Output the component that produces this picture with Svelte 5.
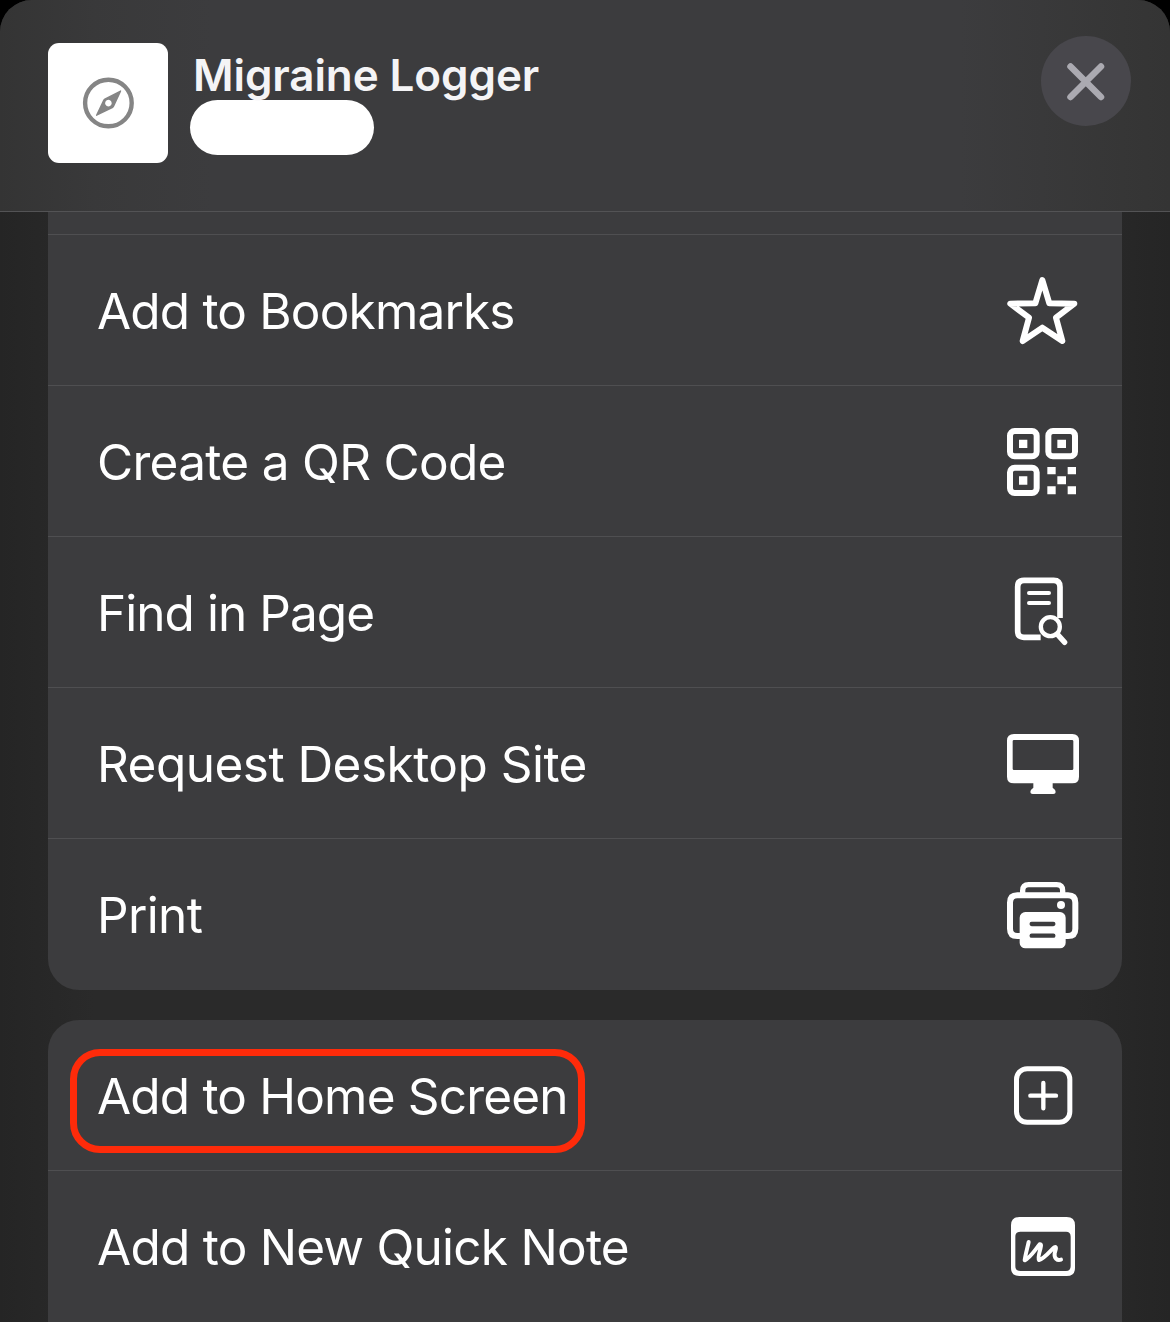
<script>
  const pageActions = [
    { label: 'Add to Bookmarks', icon: 'star', viewBox: '0 0 330 300', spacing: -0.82 },
    { label: 'Create a QR Code', icon: 'qr', viewBox: '0 3 330 300', spacing: -0.7 },
    { label: 'Find in Page', icon: 'find', viewBox: '0 6 330 300', spacing: -0.95 },
    { label: 'Request Desktop Site', icon: 'desktop', viewBox: '0 -21 330 300', spacing: -0.53 },
    { label: 'Print', icon: 'print', viewBox: '0 -18 330 300', spacing: -0.65 }
  ];
  const saveActions = [
    { label: 'Add to Home Screen', icon: 'plus', viewBox: '0 -15 330 300', highlighted: true, spacing: -0.82 },
    { label: 'Add to New Quick Note', icon: 'note', viewBox: '0 -12 330 300', spacing: -0.75 }
  ];
</script>

{#snippet row(action)}
  <div class="row">
    <span class="label" class:highlighted={action.highlighted} style:letter-spacing="{action.spacing}px">{action.label}</span>
    <svg class="icon" viewBox={action.viewBox} aria-hidden="true">
      {#if action.icon === 'star'}
        <path class="line" stroke-width="18" d="M157 60 L178 130 L253 131 L198 173 L217 243 L157 203 L98 243 L117 173 L61 131 L136 130 Z" />
      {:else if action.icon === 'qr'}
        <rect class="line" stroke-width="18" x="60" y="63" width="80" height="76" rx="14" />
        <rect class="line" stroke-width="18" x="175" y="63" width="80" height="76" rx="14" />
        <rect class="line" stroke-width="18" x="60" y="173" width="80" height="76" rx="14" />
        <path class="solid" d="M87 89h25v25H87zM202 89h26v25h-26zM87 199h25v25H87zM172 171h25v22h-25zM233 171h25v22h-25zM202 199h26v24h-26zM172 229h25v24h-25zM233 229h25v24h-25z" />
      {:else if action.icon === 'find'}
        <path class="line butt" stroke-width="17" d="M152 232H102Q83 232 83 213V81Q83 61 102 61H191Q210 61 210 81V174" />
        <path class="line" stroke-width="12" d="M117 99H177M117 129H177" />
        <circle class="line" stroke-width="13" cx="181" cy="200" r="28.5" />
        <path class="line" stroke-width="16" d="M203 224L224 247" />
      {:else if action.icon === 'desktop'}
        <path class="solid" fill-rule="evenodd" d="M72 42H247Q267 42 267 62V170Q267 190 247 190H188V203Q197 209 197 216Q197 222 190 222H128Q121 222 121 216Q121 209 130 203V190H72Q51 190 51 170V62Q51 42 72 42ZM72 60Q68 60 68 64V146Q68 150 72 150H246Q250 150 250 146V64Q250 60 246 60Z" />
      {:else if action.icon === 'print'}
        <path class="line butt" stroke-width="16" d="M98 74V62Q98 44 116 44H200Q218 44 218 62V74" />
        <path class="line butt" stroke-width="18" d="M92 198H82Q60 198 60 176V98Q60 76 82 76H234Q256 76 256 98V176Q256 198 234 198H224" />
        <rect class="solid" x="89" y="126" width="138" height="109" rx="17" />
        <circle class="solid" cx="213" cy="105" r="12" />
        <path class="cut" stroke-width="13" d="M125 162H190M125 197H190" />
      {:else if action.icon === 'plus'}
        <rect class="line" stroke-width="15" x="79.500" y="56" width="160" height="161" rx="32" />
        <path class="line" stroke-width="13" d="M160 99V175M121 137H198" />
      {:else}
        <path class="solid" fill-rule="evenodd" d="M88 51H230Q255 51 255 76V204Q255 228 230 228H88Q63 228 63 204V76Q63 51 88 51ZM91 95Q76 95 76 110V198Q76 213 91 213H228Q242 213 242 198V110Q242 95 228 95Z" />
        <path class="line" stroke-width="12" d="M116 126C112 145 106 164 104 181C120 174 134 151 149 133C155 132 153 139 151 147C147 161 144 177 147 180C164 176 179 154 193 142C202 138 196 151 194 160C192 174 201 183 213 179" />
      {/if}
    </svg>
  </div>
{/snippet}

<div class="screen">
  <div class="sheet">
    <header>
      <div class="thumb">
        <svg viewBox="0 0 52 52" aria-hidden="true">
          <circle cx="26.400" cy="26" r="23.300" fill="none" stroke="#858585" stroke-width="4.400" />
          <path fill="#858585" fill-rule="evenodd" d="M38.800 13.300Q39.600 13.500 39 14.700L32.400 29Q32 30 31 31L15.400 38.600Q13.600 39.400 14 38L21 23.200Q21.600 21.800 23 21.200ZM26.400 22.800a3.300 3.300 0 1 0 .01 0Z" />
        </svg>
      </div>
      <div class="heading">
        <h1>Migraine Logger</h1>
        <div class="pill"></div>
      </div>
      <button class="close" aria-label="Close">
        <svg viewBox="0 0 90 90" aria-hidden="true"><path d="M29.500 30.500L60 61M60 30.500L29.500 61" /></svg>
      </button>
    </header>
    <main>
      <section class="card upper">
        {#each pageActions as action}{@render row(action)}{/each}
      </section>
      <section class="card lower">
        {#each saveActions as action}{@render row(action)}{/each}
      </section>
    </main>
  </div>
</div>

<style>
  :global(body) { margin: 0; background: #000; overflow: hidden; }
  .screen { width: 1170px; height: 1322px; overflow: hidden; background: #000; font-family: Inter, 'Liberation Sans', sans-serif; }
  .sheet { height: 1322px; border-radius: 32px 32px 0 0; overflow: hidden; background: linear-gradient(90deg, #252525, #2a2a2a 8%, #2a2a2a 92%, #252525); }
  header { box-sizing: border-box; height: 212px; padding: 36px 39px 0 48px; display: flex; align-items: flex-start; border-bottom: 1px solid #535355; background: linear-gradient(90deg, #343434, #39393a 8%, #3c3c3e 18%, #3c3c3e 82%, #363636 96%, #343434); }
  .thumb { width: 120px; height: 120px; margin-top: 7px; border-radius: 11px; background: #fff; display: grid; place-items: center; }
  .thumb svg { width: 52px; height: 52px; }
  .heading { margin-left: 21.500px; flex: 1; }
  h1 { margin: 14px 0 0 3.500px; font-size: 44px; line-height: 50px; font-weight: 600; color: #f4f4f6; letter-spacing: -0.1px; white-space: nowrap; }
  .pill { width: 184.500px; height: 54.500px; border-radius: 28px; background: #fff; }
  .close { width: 90px; height: 90px; padding: 0; border: 0; border-radius: 50%; background: #48474c; }
  .close svg { display: block; width: 90px; height: 90px; }
  .close path { stroke: #abaab1; stroke-width: 6.500; stroke-linecap: round; }
  main { padding: 0 48px; }
  .card { background: #3c3c3e; }
  .upper { padding-top: 22px; height: 756px; border-radius: 0 0 31px 31px; }
  .lower { margin-top: 30px; height: 302px; border-radius: 31px 31px 0 0; }
  .row { box-sizing: border-box; height: 151px; padding: 0 22px 0 49px; border-top: 1px solid #4f4f51; display: flex; align-items: center; justify-content: space-between; }
  .lower .row:first-child { border-top: 0; height: 150px; }
  .label { position: relative; padding-top: 2px; font-size: 49.500px; line-height: 60px; color: #fff; white-space: nowrap; }
  .highlighted::after { content: ''; position: absolute; box-sizing: border-box; left: -27px; top: -15px; width: 515px; height: 104px; border: 7px solid #fe2b0a; border-radius: 30px; }
  .icon { width: 110px; height: 100px; flex: none; }
  .line { fill: none; stroke: #fff; stroke-linecap: round; stroke-linejoin: round; }
  .butt { stroke-linecap: butt; }
  .solid { fill: #fff; }
  .cut { fill: none; stroke: #3c3c3e; stroke-linecap: round; }
</style>
